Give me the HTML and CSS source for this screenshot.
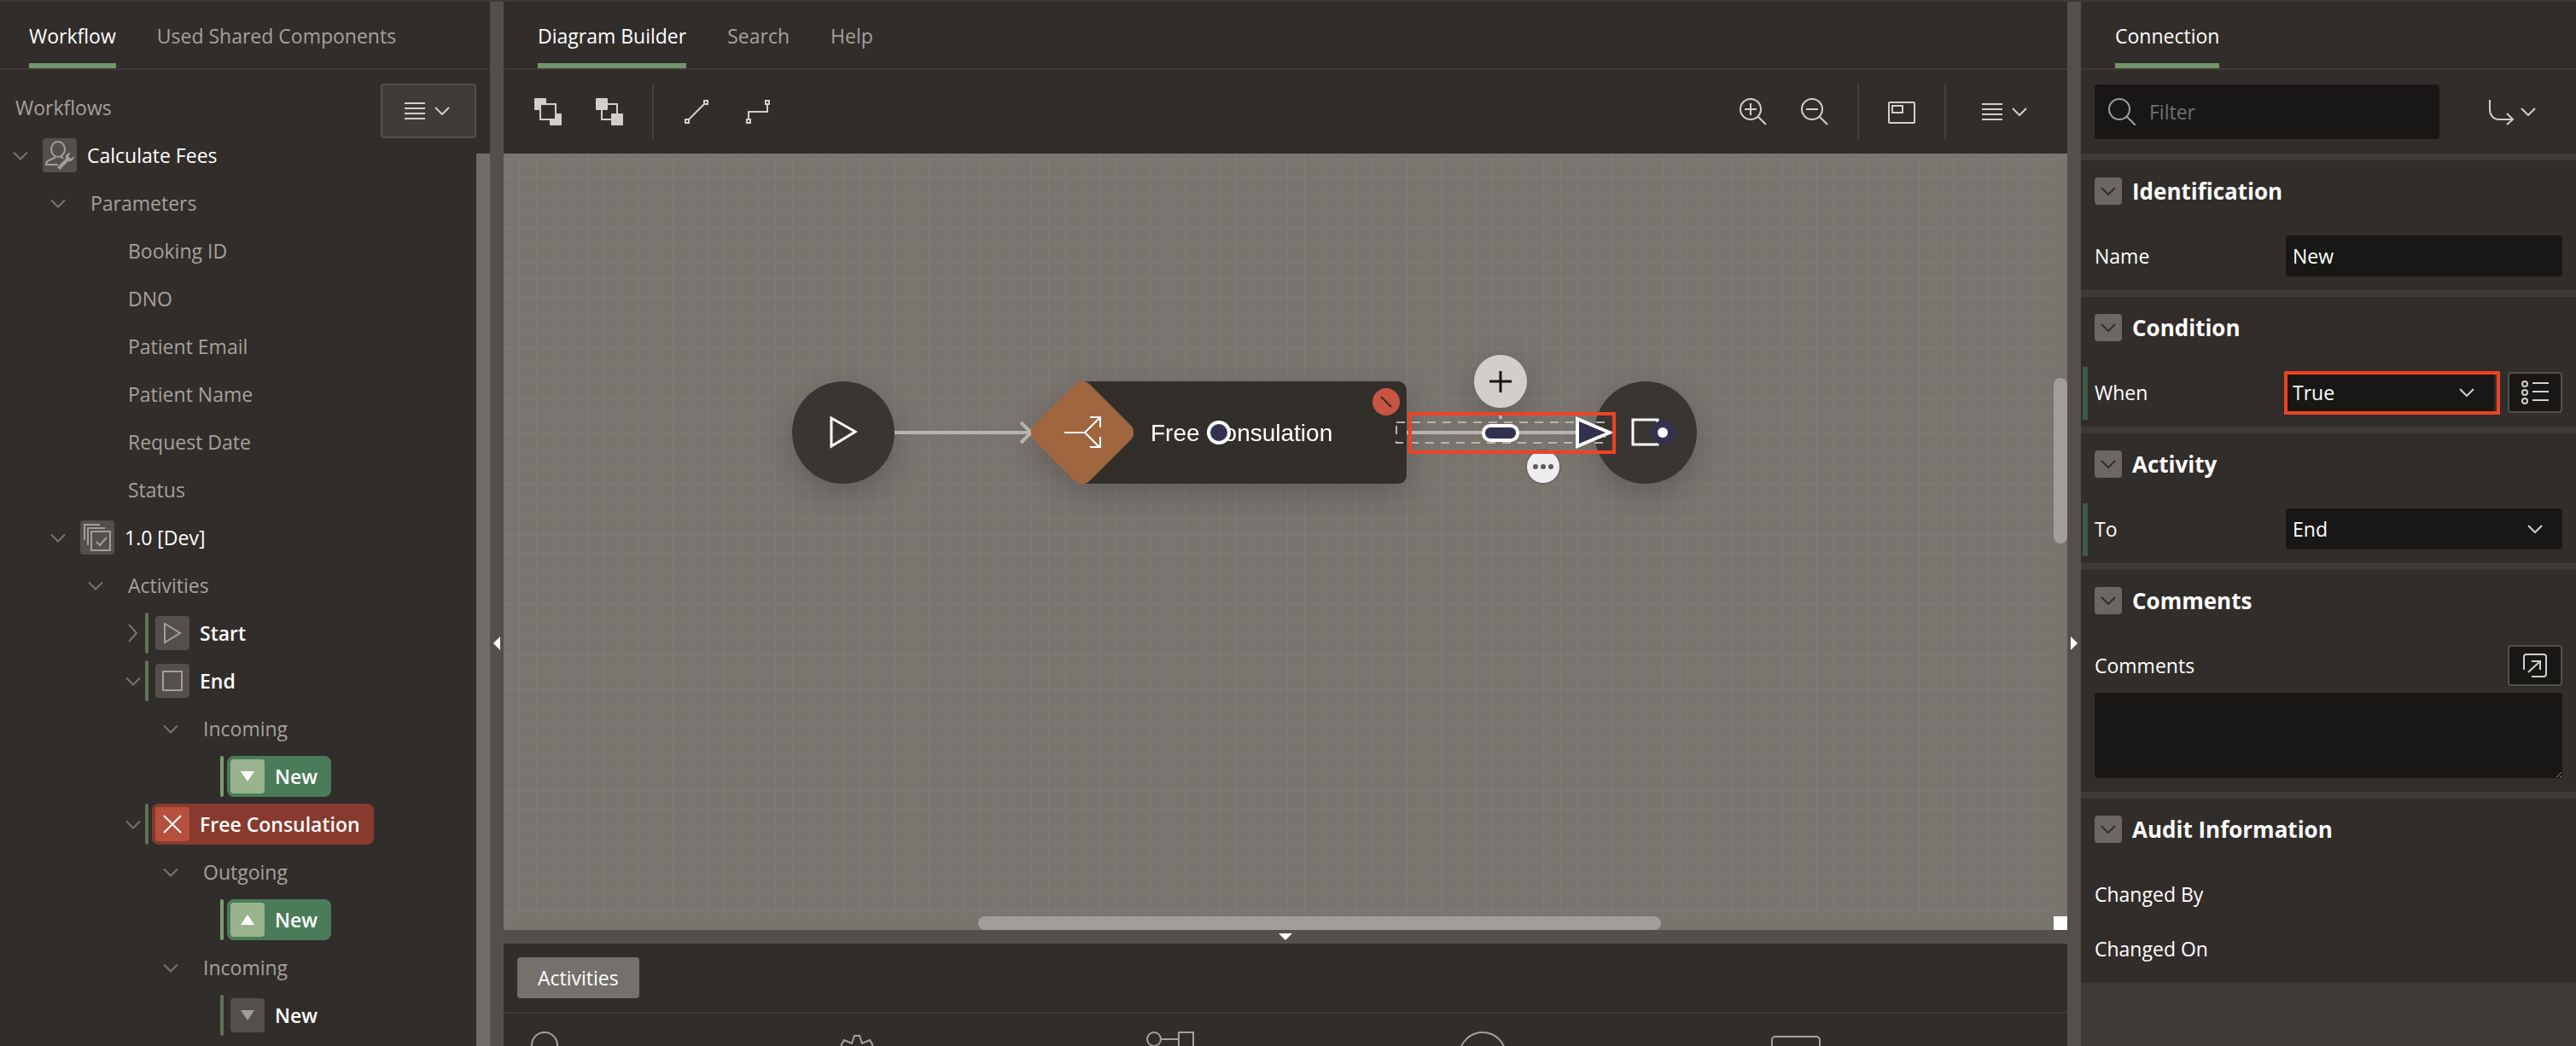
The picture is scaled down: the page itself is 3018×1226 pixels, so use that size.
FILE: index.html
```html
<!DOCTYPE html>
<html lang="en">
<head>
<meta charset="utf-8">
<title>Workflow Designer - Calculate Fees</title>
<link rel="stylesheet" href="styles.css">
</head>
<body>
<svg class="defs" width="0" height="0" aria-hidden="true">
  <symbol id="chevron" viewBox="0 0 18 10"><path d="M1 1l8 8 8-8" fill="none" stroke="currentColor" stroke-width="2"/></symbol>
  <symbol id="chevron-right" viewBox="0 0 12 22"><path d="M1 1l9 10-9 10" fill="none" stroke="currentColor" stroke-width="2"/></symbol>
  <symbol id="menu" viewBox="0 0 24 20"><path d="M0 1h24M0 7h24M0 13h24M0 19h24" stroke="currentColor" stroke-width="2"/></symbol>
  <symbol id="tri-down" viewBox="0 0 40 40"><path d="M12 14h16l-8 12z" fill="currentColor"/></symbol>
  <symbol id="tri-up" viewBox="0 0 40 40"><path d="M12 26h16l-8-12z" fill="currentColor"/></symbol>
</svg>
<div class="app">

  <aside class="pane">
    <nav class="tabs tabs-left">
      <a href="#workflow" class="tab active">Workflow</a>
      <a href="#shared" class="tab">Used Shared Components</a>
    </nav>
    <div class="tree-head">
      <span>Workflows</span>
      <button class="btn btn-menu btn-raised" aria-label="Tree menu"><svg width="24" height="20"><use href="#menu"/></svg><svg width="18" height="10"><use href="#chevron"/></svg></button>
    </div>
    <div class="tree-body">
      <ul class="tree">
        <li>
          <div class="row"><span class="toggle"><svg width="18" height="11"><use href="#chevron"/></svg></span><span class="label medium"><svg class="icon" viewBox="0 0 40 40"><ellipse cx="18" cy="13" rx="8" ry="9"/><path d="M14 21v2l-7 3c-2 1-3 3-3 5h14M21 21l3 3"/><path class="solid" d="M17 34l10-10c-1-4 2-7 6-7l-3 4 3 3 4-3c0 4-4 7-7 6L20 37z"/></svg>Calculate Fees</span></div>
          <ul>
            <li>
              <div class="row"><span class="toggle"><svg width="18" height="11"><use href="#chevron"/></svg></span><span class="label">Parameters</span></div>
              <ul>
                <li><div class="row"><span class="toggle"></span><span class="label">Booking ID</span></div></li>
                <li><div class="row"><span class="toggle"></span><span class="label">DNO</span></div></li>
                <li><div class="row"><span class="toggle"></span><span class="label">Patient Email</span></div></li>
                <li><div class="row"><span class="toggle"></span><span class="label">Patient Name</span></div></li>
                <li><div class="row"><span class="toggle"></span><span class="label">Request Date</span></div></li>
                <li><div class="row"><span class="toggle"></span><span class="label">Status</span></div></li>
              </ul>
            </li>
            <li>
              <div class="row"><span class="toggle"><svg width="18" height="11"><use href="#chevron"/></svg></span><span class="label medium"><svg class="icon" viewBox="0 0 40 40"><path d="M23 5H5v18M29 9H9v20M13 13h22v22H13zM19 25l4 4 8-9"/></svg>1.0 [Dev]</span></div>
              <ul>
                <li>
                  <div class="row"><span class="toggle"><svg width="18" height="11"><use href="#chevron"/></svg></span><span class="label">Activities</span></div>
                  <ul>
                    <li><div class="row"><span class="toggle"><svg width="12" height="22"><use href="#chevron-right"/></svg></span><i class="bar"></i><span class="label strong"><svg class="icon" viewBox="0 0 40 40"><path d="M11 9v22l18-11z"/></svg>Start</span></div></li>
                    <li>
                      <div class="row"><span class="toggle"><svg width="18" height="11"><use href="#chevron"/></svg></span><i class="bar"></i><span class="label strong"><svg class="icon" viewBox="0 0 40 40"><path d="M9 9h22v22H9z"/></svg>End</span></div>
                      <ul>
                        <li>
                          <div class="row"><span class="toggle"><svg width="18" height="11"><use href="#chevron"/></svg></span><span class="label">Incoming</span></div>
                          <ul><li><div class="row"><span class="toggle"></span><i class="bar bright"></i><span class="label strong pill green"><svg class="icon" viewBox="0 0 40 40"><use href="#tri-down"/></svg>New</span></div></li></ul>
                        </li>
                      </ul>
                    </li>
                    <li>
                      <div class="row"><span class="toggle"><svg width="18" height="11"><use href="#chevron"/></svg></span><i class="bar"></i><span class="label strong pill red"><svg class="icon" viewBox="0 0 40 40"><path d="M10 10l20 20M30 10L10 30"/></svg>Free Consulation</span></div>
                      <ul>
                        <li>
                          <div class="row"><span class="toggle"><svg width="18" height="11"><use href="#chevron"/></svg></span><span class="label">Outgoing</span></div>
                          <ul><li><div class="row"><span class="toggle"></span><i class="bar bright"></i><span class="label strong pill green"><svg class="icon" viewBox="0 0 40 40"><use href="#tri-up"/></svg>New</span></div></li></ul>
                        </li>
                        <li>
                          <div class="row"><span class="toggle"><svg width="18" height="11"><use href="#chevron"/></svg></span><span class="label">Incoming</span></div>
                          <ul><li><div class="row"><span class="toggle"></span><i class="bar"></i><span class="label strong"><svg class="icon" viewBox="0 0 40 40"><use href="#tri-down"/></svg>New</span></div></li></ul>
                        </li>
                      </ul>
                    </li>
                  </ul>
                </li>
              </ul>
            </li>
          </ul>
        </li>
      </ul>
      <div class="tree-scroll"></div>
    </div>
  </aside>

  <div class="splitter"><svg width="8" height="16" viewBox="0 0 8 16"><path d="M8 0v16L0 8z"/></svg></div>

  <main class="pane center">
    <nav class="tabs">
      <a href="#builder" class="tab active">Diagram Builder</a>
      <a href="#search" class="tab">Search</a>
      <a href="#help" class="tab">Help</a>
    </nav>
    <div class="toolbar">
      <button class="btn" aria-label="Bring to front"><svg width="32" height="32" viewBox="0 0 32 32"><path class="solid" d="M1 0h12a1 1 0 0 1 1 1v5H6v8H1a1 1 0 0 1-1-1V1a1 1 0 0 1 1-1zM26 18h5a1 1 0 0 1 1 1v12a1 1 0 0 1-1 1H19a1 1 0 0 1-1-1v-5h8z"/><path d="M7 7h18v18H7z"/></svg></button>
      <button class="btn" aria-label="Send to back"><svg width="32" height="32" viewBox="0 0 32 32"><path d="M7 7h18v18H7z"/><rect class="solid" width="14" height="14" rx="1"/><rect class="solid" x="18" y="18" width="14" height="14" rx="1"/></svg></button>
      <i class="sep"></i>
      <button class="btn" aria-label="Straight connector"><svg width="32" height="32" viewBox="0 0 32 32"><path d="M3 25h4v4H3zM25 3h4v4h-4zM7 25L25 7"/></svg></button>
      <button class="btn" aria-label="Elbow connector"><svg width="32" height="32" viewBox="0 0 32 32"><path d="M3 25h4v4H3zM25 3h4v4h-4zM5 25v-9h22V7"/></svg></button>
      <span class="grow"></span>
      <button class="btn" aria-label="Zoom in"><svg width="32" height="32" viewBox="0 0 32 32"><circle cx="13" cy="13" r="12"/><path d="M22 22l9 9M6 13h14M13 6v14"/></svg></button>
      <button class="btn" aria-label="Zoom out"><svg width="32" height="32" viewBox="0 0 32 32"><circle cx="13" cy="13" r="12"/><path d="M22 22l9 9M6 13h14"/></svg></button>
      <i class="sep"></i>
      <button class="btn" aria-label="Overview"><svg width="32" height="32" viewBox="0 0 32 32"><rect x="1" y="5" width="30" height="24" rx="1"/><rect x="5" y="9" width="12" height="8"/></svg></button>
      <i class="sep"></i>
      <button class="btn btn-menu" aria-label="Diagram menu"><svg width="24" height="20"><use href="#menu"/></svg><svg width="18" height="10"><use href="#chevron"/></svg></button>
    </div>
    <div class="canvas">
      <div class="grid">
        <svg class="diagram" role="img" aria-label="Workflow diagram">
          <defs>
            <filter id="shadow" x="-50%" y="-50%" width="200%" height="200%"><feDropShadow dx="0" dy="12" stdDeviation="18" flood-color="#000" flood-opacity=".2"/></filter>
          </defs>
          <g transform="translate(-590 -180)">
            <g filter="url(#shadow)">
              <circle cx="988" cy="507" r="60" fill="#383531"/>
              <circle cx="1928" cy="507" r="60" fill="#383531"/>
              <path d="M1268 447h370a10 10 0 0 1 10 10v100a10 10 0 0 1-10 10h-370z" fill="#312d2a"/>
              <rect x="1222" y="461" width="92" height="92" rx="12" transform="rotate(45 1268 507)" fill="#a06640"/>
              <circle cx="1758" cy="447" r="31" fill="#d2cfca"/>
            </g>
            <path d="M974 490v33l28-17z" fill="none" stroke="#fff" stroke-width="3"/>
            <path d="M1048 507h158M1196 495l12 12-12 12" fill="none" stroke="#b7b3af" stroke-width="4"/>
            <rect x="1222" y="461" width="92" height="92" rx="12" transform="rotate(45 1268 507)" fill="#a06640"/>
            <path d="M1247 507h24l17-17M1271 507l17 17M1277 489h12v12M1277 524h12v-12" fill="none" stroke="#fff" stroke-width="2"/>
            <text x="1348" y="517" class="node-text">Free Consulation</text>
            <circle cx="1428" cy="507" r="12" fill="#333150" stroke="#fff" stroke-width="4"/>
            <circle cx="1624" cy="471" r="16" fill="#c75542"/>
            <path d="M1618 465l12 12" stroke="#312d2a" stroke-width="2"/>
            <path d="M1758 435v25M1745 447h26" stroke="#161513" stroke-width="3"/>
            <path d="M1758 487v4" stroke="#b7b3af" stroke-width="4"/>
            <path d="M1648 507h200" stroke="#b7b3af" stroke-width="4"/>
            <path d="M1913 492h29v29h-29z" fill="none" stroke="#fff" stroke-width="3"/>
            <rect x="1636" y="495" width="244" height="24" fill="none" stroke="#b7b3af" stroke-width="2" stroke-dasharray="10 8"/>
            <rect x="1738" y="499" width="40" height="17" rx="8" fill="#333150" stroke="#fff" stroke-width="4"/>
            <path d="M1848 491v32l38-16z" fill="#333150" stroke="#fff" stroke-width="4"/>
            <circle cx="1948" cy="507" r="14" fill="#333150"/>
            <circle cx="1948" cy="507" r="6" fill="#fff"/>
            <circle cx="1808" cy="547" r="20" fill="#eee" stroke="#6d6965" stroke-width="2"/>
            <g fill="#5e5c5a"><circle cx="1799" cy="547" r="3"/><circle cx="1808" cy="547" r="3"/><circle cx="1817" cy="547" r="3"/></g>
            <rect x="1652" y="485" width="239" height="45" fill="none" stroke="#ee4226" stroke-width="4"/>
          </g>
        </svg>
      </div>
      <div class="vscroll"><i></i></div>
      <div class="hscroll"><i></i></div>
      <div class="corner"></div>
    </div>
    <div class="splitter"><svg width="16" height="8" viewBox="0 0 16 8"><path d="M0 0h16L8 8z"/></svg></div>
    <section class="tray">
      <div class="tray-head"><button class="chip">Activities</button></div>
      <div class="tray-items">
        <svg viewBox="0 0 64 64"><circle cx="32" cy="21" r="15"/></svg>
        <svg viewBox="0 0 64 64"><path d="M13 40c0-6 4-6 3-10-2-5-3-7-2-10l3-5 9 4 3-9h6l3 9 9-4 3 5c1 3 0 5-2 10-1 4 3 4 3 10"/></svg>
        <svg viewBox="0 0 64 64"><circle cx="13" cy="14" r="8"/><path d="M21 14h21M42 6h17v17H42z"/></svg>
        <svg viewBox="0 0 64 64"><circle cx="32" cy="33" r="27"/></svg>
        <svg viewBox="0 0 64 64"><rect x="4" y="11" width="56" height="44" rx="4"/></svg>
      </div>
    </section>
  </main>

  <div class="splitter"><svg width="8" height="16" viewBox="0 0 8 16"><path d="M0 0v16l8-8z"/></svg></div>

  <aside class="pane props">
    <nav class="tabs"><a href="#connection" class="tab active">Connection</a></nav>
    <div class="filter-row">
      <label class="filter"><svg width="32" height="32" viewBox="0 0 32 32"><circle cx="13" cy="13" r="12"/><path d="M22 22l10 10"/></svg><input type="text" placeholder="Filter" aria-label="Filter"></label>
      <button class="btn goto" aria-label="Go to group"><svg width="32" height="32" viewBox="0 0 32 32"><path d="M3 2v11c0 7 4 12 11 12h16M23 18l7 7-7 6"/></svg><svg width="18" height="10"><use href="#chevron"/></svg></button>
    </div>
    <div class="sections">
      <section>
        <h2><button class="collapse" aria-label="Collapse"><svg width="18" height="10"><use href="#chevron"/></svg></button>Identification</h2>
        <div class="field"><label for="name">Name</label><input id="name" class="control" type="text" value="New"></div>
      </section>
      <section>
        <h2><button class="collapse" aria-label="Collapse"><svg width="18" height="10"><use href="#chevron"/></svg></button>Condition</h2>
        <div class="field changed"><label for="when">When</label><div class="select flagged"><select id="when" class="control"><option>True</option><option>False</option></select><svg width="18" height="10"><use href="#chevron"/></svg></div><button class="square" aria-label="Quick pick"><svg width="32" height="32" viewBox="0 0 32 32"><circle cx="4" cy="6" r="3"/><circle cx="4" cy="16" r="3"/><circle cx="4" cy="26" r="3"/><path d="M13 5h19M13 15h19M13 25h19"/></svg></button></div>
      </section>
      <section>
        <h2><button class="collapse" aria-label="Collapse"><svg width="18" height="10"><use href="#chevron"/></svg></button>Activity</h2>
        <div class="field changed"><label for="to">To</label><div class="select"><select id="to" class="control"><option>End</option></select><svg width="18" height="10"><use href="#chevron"/></svg></div></div>
      </section>
      <section>
        <h2><button class="collapse" aria-label="Collapse"><svg width="18" height="10"><use href="#chevron"/></svg></button>Comments</h2>
        <div class="field stacked"><label for="comments">Comments</label><button class="square" aria-label="Open editor"><svg width="32" height="32" viewBox="0 0 32 32"><path d="M3 21V6a3 3 0 0 1 3-3h20a3 3 0 0 1 3 3v20a3 3 0 0 1-3 3H12M8 24l14-13M12 11h10v10"/></svg></button></div>
        <textarea id="comments" class="control"></textarea>
      </section>
      <section class="audit">
        <h2><button class="collapse" aria-label="Collapse"><svg width="18" height="10"><use href="#chevron"/></svg></button>Audit Information</h2>
        <dl><dt>Changed By</dt><dt>Changed On</dt></dl>
      </section>
    </div>
  </aside>
</div>
</body>
</html>
```
FILE: styles.css
```css
:root {
  --bg: #312d2a;
  --line: #3d3936;
  --muted: #a5a19d;
  --icon: #d2cfcb;
  --field: #181715;
}
* { box-sizing: border-box; }
body {
  margin: 0;
  background: var(--bg);
  color: #fff;
  font: 400 23px/32px "Open Sans", "Noto Sans", sans-serif;
}
button, input, select, textarea { font: inherit; color: inherit; }
button { cursor: pointer; padding: 0; border: 0; background: none; }
ul { list-style: none; margin: 0; padding: 0; }
svg { display: block; flex: none; fill: none; stroke: currentColor; stroke-width: 2; }
svg .solid { fill: currentColor; stroke: none; }
symbol path { stroke-linecap: butt; }
#tri-down path, #tri-up path { stroke: none; }
.defs { position: absolute; }

.app {
  display: grid;
  grid-template-columns: 574px 16px minmax(0, 1fr) 16px 580px;
  height: 100vh;
  overflow: hidden;
  border-top: 2px solid var(--line);
}
.pane { display: flex; flex-direction: column; min-width: 0; min-height: 0; overflow: hidden; }
.splitter {
  display: flex;
  flex: none;
  align-items: center;
  justify-content: center;
  min-height: 16px;
  background: #53504b;
}
.app > .splitter { padding-top: 280px; }
.splitter svg { fill: #fff; stroke: none; }

/* Tabs */
.tabs {
  display: flex;
  flex: none;
  gap: 48px;
  height: 80px;
  padding-left: 40px;
  border-bottom: 2px solid var(--line);
}
.tabs-left { padding-left: 34px; }
.tab {
  display: flex;
  align-items: center;
  padding-top: 8px;
  border-bottom: 6px solid transparent;
  color: var(--muted);
  text-decoration: none;
}
.tab.active { color: #fff; font-weight: 500; border-color: #75946c; }

/* Buttons */
.btn {
  display: flex;
  align-items: center;
  justify-content: center;
  width: 64px;
  height: 64px;
  color: var(--icon);
}
.btn-menu { width: 104px; gap: 11px; padding-right: 3px; }
.btn-raised {
  width: 112px;
  border: 2px solid #53504b;
  border-radius: 4px;
  background: #3e3b36;
}

/* Tree */
.tree-head {
  display: flex;
  flex: none;
  align-items: flex-start;
  justify-content: space-between;
  height: 72px;
  padding: 16px 16px 0 18px;
  color: var(--muted);
}
.tree-head span { line-height: 56px; }
.tree-body { display: flex; min-height: 0; flex: 1; }
.tree { flex: 1; }
.tree ul { padding-left: 44px; }
.tree-scroll { width: 16px; margin-top: 26px; background: #706d69; }
.row { display: flex; align-items: center; height: 56px; padding-left: 2px; color: var(--muted); }
.toggle { display: flex; justify-content: center; width: 44px; color: #77736f; }
.bar { width: 4px; height: 48px; margin: 0 4px 0 -8px; border-radius: 2px; background: #5f7359; }
.bar.bright { background: #7c9e72; }
.label { display: flex; align-items: center; gap: 12px; height: 48px; padding: 0 16px; border-radius: 8px; white-space: nowrap; }
.label:has(.icon) { padding-left: 4px; }
.icon { width: 40px; height: 40px; border-radius: 4px; background: #53504b; color: #a19e9a; }
.medium { color: #fff; font-weight: 500; }
.strong { color: #fff; font-weight: 600; }
.green { background: #4a7c59; }
.green .icon { background: #9ab38f; color: #fff; }
.red { background: #873a2d; }
.red .icon { background: #b64f3c; color: #fff; }

/* Diagram */
.toolbar { display: flex; flex: none; align-items: center; gap: 8px; height: 98px; padding: 0 20px; }
.sep { width: 2px; height: 64px; margin: 0 10px; background: #45413d; }
.grow { flex: 1; }
.canvas {
  display: grid;
  flex: 1;
  grid-template: minmax(0, 1fr) 16px / minmax(0, 1fr) 16px;
  min-height: 0;
  background: #7a746f;
}
.grid {
  background-image:
    linear-gradient(to right, #807b76 1px, transparent 1px),
    linear-gradient(to bottom, #807b76 1px, transparent 1px);
  background-size: 20px 20px;
  background-position: 18px 7px;
}
.diagram { width: 100%; height: 100%; stroke: none; }
.node-text { fill: #fff; font: 28px "Liberation Sans", Arial, sans-serif; }
.vscroll { display: grid; grid-template-rows: 263fr 194fr 437fr; }
.hscroll { display: grid; grid-template-columns: 556fr 800fr 460fr; }
.vscroll i { grid-row: 2; border-radius: 8px; background: #a19d99; }
.hscroll i { grid-column: 2; border-radius: 8px; background: #a19d99; }
.corner { background: #fff; }

/* Activity tray */
.tray { flex: none; height: 120px; overflow: hidden; }
.tray-head { display: flex; align-items: center; height: 82px; padding: 0 16px; border-bottom: 2px solid var(--line); }
.chip { height: 48px; padding: 0 24px; border-radius: 4px; background: #74706b; font-weight: 500; }
.tray-items { display: grid; grid-template-columns: repeat(5, 1fr); padding: 16px 0 0 16px; margin-right: -16px; color: var(--muted); }
.tray-items svg { width: 64px; height: 64px; }

/* Property editor */
.props { background: #3e3b36; }
.props .tabs, .filter-row, .sections section { background: var(--bg); }
.filter-row { display: flex; flex: none; align-items: center; height: 98px; padding: 0 16px; gap: 24px; }
.filter {
  display: flex;
  flex: 1;
  align-items: center;
  gap: 16px;
  height: 64px;
  padding: 0 16px;
  border-radius: 4px;
  background: var(--field);
  color: #a19e9a;
}
.filter input { flex: 1; min-width: 0; padding: 0; border: 0; outline: 0; background: none; }
.filter input::placeholder { color: #75726e; opacity: 1; }
.goto { width: 120px; gap: 7px; }
.sections { display: flex; flex-direction: column; gap: 8px; padding-top: 8px; }
.sections section { padding-bottom: 16px; }
h2 { display: flex; align-items: center; gap: 12px; height: 72px; margin: 0; padding: 0 16px; font-size: 26px; font-weight: 700; }
.collapse { display: flex; align-items: center; justify-content: center; width: 32px; height: 32px; border-radius: 4px; background: #6b6863; color: var(--bg); }
.field { position: relative; display: flex; align-items: center; gap: 16px; padding: 16px 16px 0; }
.field label { width: 208px; font-weight: 500; }
.field.changed::before { content: ""; position: absolute; left: 2px; top: 10px; bottom: -8px; width: 6px; background: #3f5a45; }
.field.stacked { justify-content: space-between; }
.control { display: block; width: 100%; height: 48px; padding: 0 8px; border: 0; border-radius: 4px; background: var(--field); font-weight: 500; }
input.control { flex: 1; width: auto; min-width: 0; }
select.control { appearance: none; }
.select { position: relative; flex: 1; color: #fff; }
.select svg { position: absolute; right: 23px; top: 19px; color: var(--icon); pointer-events: none; }
.flagged::after { content: ""; position: absolute; inset: -1px -7px -2px -2px; border: 4px solid #ee4226; pointer-events: none; }
.square {
  display: flex;
  flex: none;
  align-items: center;
  justify-content: center;
  width: 64px;
  height: 48px;
  border: 2px solid #53504b;
  border-radius: 4px;
  background: var(--field);
  color: var(--icon);
}
textarea.control { width: calc(100% - 32px); height: 100px; margin: 8px 16px 0; resize: both; }
dl { margin: 0; padding: 8px 16px; font-weight: 500; }
dt { height: 64px; line-height: 64px; }
.sections .audit { padding-bottom: 0; }
```
